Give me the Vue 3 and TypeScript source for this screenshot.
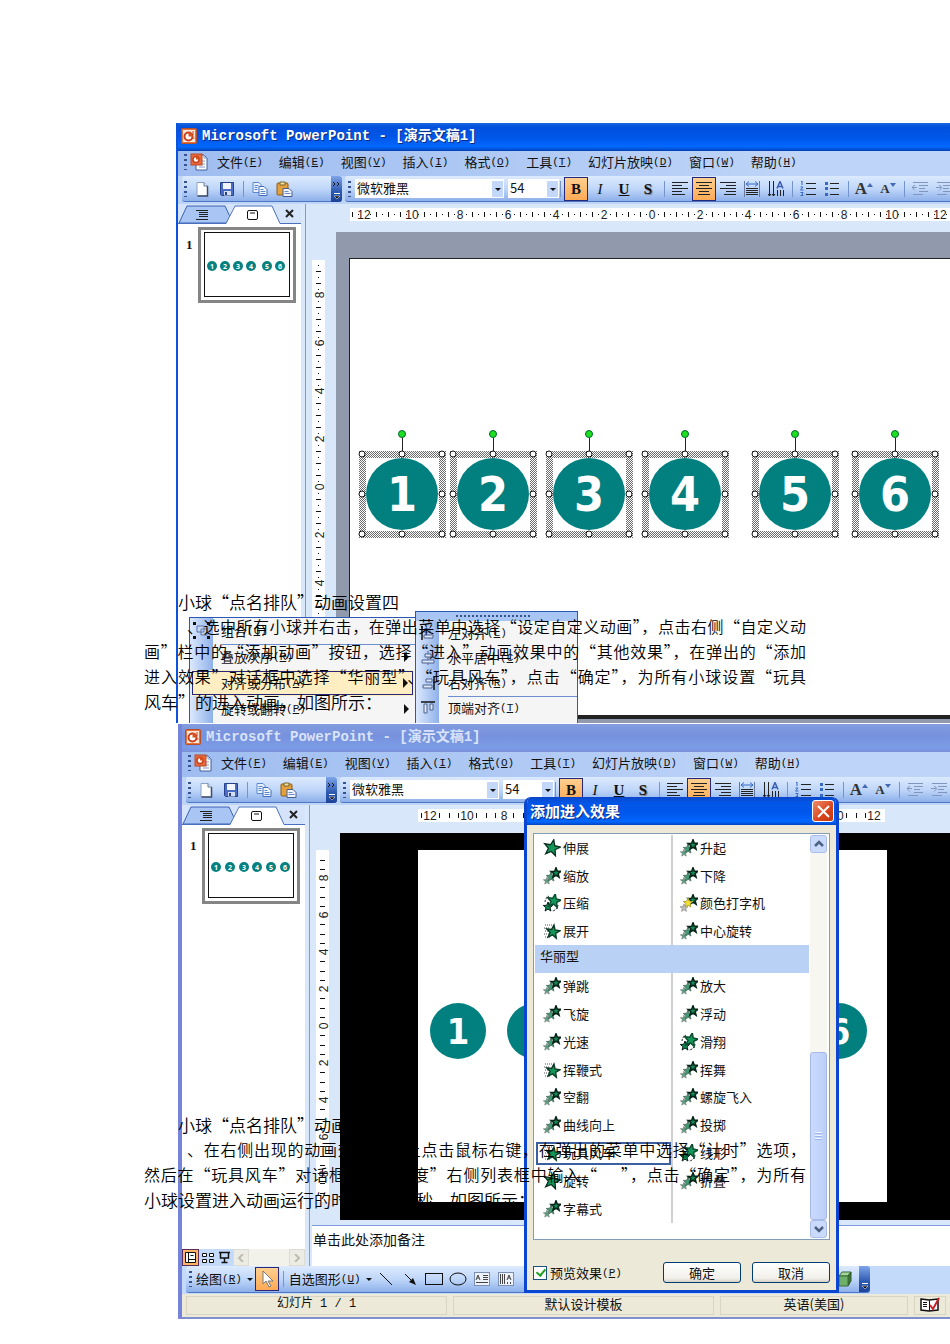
<script setup lang="ts">
import { ref } from 'vue'

interface MenuEntry { text: string; key: string }
interface Mark { pos: number; kind: 'label' | 'tick' | 'dot'; label: string }
interface Effect { name: string; icon: string }

const windows = [
  { id: 'first', active: true },
  { id: 'second', active: false },
]

const menus: MenuEntry[] = [
  { text: '文件', key: 'F' },
  { text: '编辑', key: 'E' },
  { text: '视图', key: 'V' },
  { text: '插入', key: 'I' },
  { text: '格式', key: 'O' },
  { text: '工具', key: 'T' },
  { text: '幻灯片放映', key: 'D' },
  { text: '窗口', key: 'W' },
  { text: '帮助', key: 'H' },
]

const formatTools = [
  'bold on', 'italic', 'underline', 'shadow', '|',
  'left', 'center on', 'right', 'spread', 'columns', '|',
  'numbers', 'bullets', '|', 'grow', 'shrink', '|', 'outdent', 'indent',
].map((t) => ({ name: t.split(' ')[0], on: t.endsWith(' on') }))

const letters: Record<string, string> = { bold: 'B', italic: 'I', underline: 'U', shadow: 'S' }

function marks(origin: number, step: number, perLabel: number, size: number, dotted: boolean): Mark[] {
  const out: Mark[] = []
  const first = Math.ceil((2 - origin) / step)
  const last = Math.floor((size - 2 - origin) / step)
  for (let n = first; n <= last; n++) {
    const pos = Math.round(origin + n * step)
    if (n % perLabel === 0) out.push({ pos, kind: 'label', label: String(Math.abs(n / perLabel) * 2) })
    else out.push({ pos, kind: dotted && n % 2 !== 0 ? 'dot' : 'tick', label: '' })
  }
  return out
}

const rulers: Record<string, { w: number; h: number; across: Mark[]; down: Mark[] }> = {
  first: { w: 604, h: 463, across: marks(302, 6, 8, 604, true), down: marks(227, 6, 8, 463, true) },
  second: { w: 467, h: 352, across: marks(234, 9.25, 4, 467, false), down: marks(176, 9.25, 4, 352, false) },
}

const thumbs: Record<string, number[]> = {
  first: [8, 21, 34, 47, 63, 76],
  second: [8, 22, 36, 49, 63, 77],
}

const balls = [402, 493, 589, 685, 795, 895].map((x, i) => ({ x: x - 336, n: i + 1 }))
const showBalls = [40, 117, 193, 269, 345, 421].map((x, i) => ({ x, n: i + 1 }))

const star = '0,-10 2.5,-3.4 9.5,-3.1 4,1.3 5.9,8.1 0,4.2 -5.9,8.1 -4,1.3 -9.5,-3.1 -2.5,-3.4'

const moderate: Effect[] = [
  { name: '伸展', icon: 'star' }, { name: '升起', icon: 'trail' },
  { name: '缩放', icon: 'trail' }, { name: '下降', icon: 'trail' },
  { name: '压缩', icon: 'spin' }, { name: '颜色打字机', icon: 'gold' },
  { name: '展开', icon: 'fade' }, { name: '中心旋转', icon: 'trail' },
]
const exciting: Effect[] = [
  { name: '弹跳', icon: 'trail' }, { name: '放大', icon: 'trail' },
  { name: '飞旋', icon: 'trail' }, { name: '浮动', icon: 'trail' },
  { name: '光速', icon: 'trail' }, { name: '滑翔', icon: 'spin' },
  { name: '挥鞭式', icon: 'fade' }, { name: '挥舞', icon: 'trail' },
  { name: '空翻', icon: 'trail' }, { name: '螺旋飞入', icon: 'trail' },
  { name: '曲线向上', icon: 'trail' }, { name: '投掷', icon: 'trail' },
  { name: '玩具风车', icon: 'fade' }, { name: '线形', icon: 'spin' },
  { name: '旋转', icon: 'star' }, { name: '折叠', icon: 'trail' },
  { name: '字幕式', icon: 'trail' },
]
const chosen = ref('玩具风车')
const preview = ref(true)
</script>

<template>
  <svg class="symbols" aria-hidden="true">
    <defs>
      <pattern id="hatch" width="4" height="4" patternUnits="userSpaceOnUse">
        <rect width="4" height="4" fill="#fff" />
        <path d="M0 0h1v1H0zM2 0h1v1H2zM1 1h1v1H1zM3 1h1v1H3zM0 2h1v1H0zM2 2h1v1H2zM1 3h1v1H1zM3 3h1v1H3z" fill="#6a6a6a" />
      </pattern>
    </defs>
    <symbol id="i-app" viewBox="0 0 16 16">
      <rect x="0.5" y="0.5" width="15" height="15" rx="1" fill="#e8703a" stroke="#b5502c" />
      <rect x="2" y="2" width="12" height="12" fill="#fbe9dc" />
      <circle cx="7.5" cy="8.5" r="4" fill="#fff" stroke="#c8401c" stroke-width="2" />
      <path d="M7.5 8.5V4.5a4 4 0 0 1 4 4z" fill="#d9541e" />
      <path d="M12 3v4M13.5 10h-2" stroke="#c8401c" />
    </symbol>
    <symbol id="i-doc" viewBox="0 0 18 18">
      <path d="M6 2h8l3 3v12H6z" fill="#fff" stroke="#3f5f9c" />
      <path d="M14 2v3h3M9 8h6M9 11h6M9 14h6" fill="none" stroke="#7b98cf" />
      <rect x="1" y="1" width="11" height="11" fill="#e66a3b" stroke="#b9482a" />
      <circle cx="6" cy="6.500" r="3" fill="#fff" stroke="#c8401c" stroke-width="1.500" />
      <path d="M6 6.500V3.500a3 3 0 0 1 3 3z" fill="#d9541e" />
    </symbol>
    <symbol id="i-new" viewBox="0 0 16 16">
      <path d="M3 1.500h7l3.500 3.500v10H3z" fill="#fff" stroke="#8ea2c4" />
      <path d="M13.500 5v10H3.500" fill="none" stroke="#3c4c6c" stroke-width="1.500" />
      <path d="M10 1.500V5h3.500" fill="#dce6f7" stroke="#66789c" />
    </symbol>
    <symbol id="i-save" viewBox="0 0 16 16">
      <path d="M1.500 1.500h13v13h-12l-1-1z" fill="#4a6cc4" stroke="#27408c" />
      <rect x="4" y="2" width="8" height="6" fill="#f2f5fc" />
      <rect x="5" y="10" width="7" height="4.500" fill="#d5ddf0" />
      <rect x="6" y="11" width="2" height="3" fill="#27408c" />
    </symbol>
    <symbol id="i-copy" viewBox="0 0 16 16">
      <path d="M1 1.500h6l2 2v8H1z" fill="#e9f1ff" stroke="#5b86cc" />
      <path d="M7 5.500h5l3 3v6H7z" fill="#f4f8ff" stroke="#3f6dbb" />
      <path d="M2.500 4.500h4M2.500 6.500h3M2.500 8.500h3M8.500 8.500h3M8.500 10.500h5M8.500 12.500h5" stroke="#5b86cc" />
    </symbol>
    <symbol id="i-paste" viewBox="0 0 17 16">
      <rect x="1" y="2" width="11" height="12" rx="1" fill="#e3a03c" stroke="#8c5d16" />
      <path d="M4 1h5v3H4z" fill="#f3dfa0" stroke="#7b6431" />
      <path d="M7 7.500h6l3 3v5H7z" fill="#eef3fc" stroke="#4a5f8c" />
      <path d="M8.500 10.500h4M8.500 12.500h6" stroke="#6f8cc5" />
    </symbol>
    <symbol id="i-left" viewBox="0 0 16 16"><path d="M0 1.500h16M0 4.500h10M0 7.500h16M0 10.500h10M0 13.500h13" stroke="#222" /></symbol>
    <symbol id="i-center" viewBox="0 0 16 16"><path d="M0 1.500h16M3 4.500h10M0 7.500h16M3 10.500h10M2 13.500h12" stroke="#222" /></symbol>
    <symbol id="i-right" viewBox="0 0 16 16"><path d="M0 1.500h16M6 4.500h10M0 7.500h16M6 10.500h10M4 13.500h12" stroke="#222" /></symbol>
    <symbol id="i-spread" viewBox="0 0 16 16">
      <path d="M0.500 0v16M15.500 0v16" stroke="#66799f" />
      <path d="M2 3h12M5 0.500L2 3l3 2.500M11 0.500L14 3l-3 2.500" fill="none" stroke="#3569c4" />
      <path d="M2 7.500h12M2 9.500h12M2 11.500h12M2 13.500h12" stroke="#222" />
    </symbol>
    <symbol id="i-columns" viewBox="0 0 16 16">
      <path d="M1.500 0v15M5.500 0v15M9.500 9v6M12.500 9v6M15.500 9v6M0 13l1.500 2L3 13M4 13l1.500 2L7 13" fill="none" stroke="#222" />
      <path d="M9 7.500L12 0.500l3 7M10 5.500h4" fill="none" stroke="#3a5faf" stroke-width="1.500" />
    </symbol>
    <symbol id="i-numbers" viewBox="0 0 16 16">
      <path d="M6 2.500h10M6 7.500h10M6 13.500h10" stroke="#222" />
      <path d="M1 1l1-1v4M0.500 6h2.500l-2.500 3h3M0.500 11.500h2.500l-1 1.500 1 1.500H0.500" fill="none" stroke="#3569c4" />
    </symbol>
    <symbol id="i-bullets" viewBox="0 0 16 16">
      <path d="M6 2.500h9M6 7.500h9M6 13.500h9" stroke="#222" />
      <path d="M1 1h3v3H1zM1 6h3v3H1zM1 12h3v3H1z" fill="#3569c4" />
    </symbol>
    <symbol id="i-outdent" viewBox="0 0 16 16"><path d="M1 1.500h15M7 4.500h9M7 7.500h6M7 10.500h9M1 13.500h10M0 6.500h5M3 4L0 6.500l3 3" fill="none" stroke="#8195bd" /></symbol>
    <symbol id="i-indent" viewBox="0 0 16 16"><path d="M1 1.500h15M7 4.500h9M7 7.500h6M7 10.500h9M1 13.500h10M0 6.500h5M3 4l3 2.500-3 3" fill="none" stroke="#8195bd" /></symbol>
    <symbol id="i-group" viewBox="0 0 17 17">
      <path d="M0 0h3v3H0zM14 0h3v3h-3zM0 14h3v3H0zM14 14h3v3h-3z" fill="#111" />
      <path d="M4 4h7v6H4zM8 7h6v6H8z" fill="#c4d6f5" stroke="#5d76a5" />
    </symbol>
    <symbol id="i-al" viewBox="0 0 14 14"><path d="M1 0v14" stroke="#111" stroke-width="1.500" /><path d="M3 3h6v3H3zM3 9h9v3H3z" fill="#dfe8f8" stroke="#4d618e" /></symbol>
    <symbol id="i-ac" viewBox="0 0 14 14"><path d="M7 0v14" stroke="#53699a" /><path d="M4 3h6v3H4zM1 9h12v3H1z" fill="#dfe8f8" stroke="#4d618e" /></symbol>
    <symbol id="i-ar" viewBox="0 0 14 14"><path d="M13 0v14" stroke="#111" stroke-width="1.500" /><path d="M5 3h6v3H5zM2 9h9v3H2z" fill="#dfe8f8" stroke="#4d618e" /></symbol>
    <symbol id="i-at" viewBox="0 0 14 14"><path d="M0 1h14" stroke="#111" stroke-width="1.500" /><path d="M3 3h3v9H3zM9 3h3v6H9z" fill="#dfe8f8" stroke="#4d618e" /></symbol>
    <symbol id="s-star" viewBox="0 0 18 18"><polygon :points="star" transform="translate(9 9) rotate(12) scale(.85)" fill="#13965a" stroke="#0a2e1e" stroke-width="1.500" /></symbol>
    <symbol id="s-trail" viewBox="0 0 18 18">
      <polygon :points="star" transform="translate(4 14) scale(.38)" fill="#5a9f83" stroke="#76877f" stroke-width="2" />
      <polygon :points="star" transform="translate(8 10) scale(.5)" fill="#3c9a74" stroke="#58786a" stroke-width="2" />
      <polygon :points="star" transform="translate(13 6) scale(.52)" fill="#128a55" stroke="#062417" stroke-width="3" />
    </symbol>
    <symbol id="s-gold" viewBox="0 0 18 18">
      <polygon :points="star" transform="translate(4 14) scale(.42)" fill="#bbb" stroke="#999" stroke-width="2" />
      <polygon :points="star" transform="translate(13 6) scale(.52)" fill="#128a55" stroke="#062417" stroke-width="3" />
      <polygon :points="star" transform="translate(8 9) scale(.5)" fill="#f5e334" stroke="#b5a92a" stroke-width="2" />
    </symbol>
    <symbol id="s-spin" viewBox="0 0 18 18">
      <path d="M2 8c0-3 2-5 4-6M15 11c0 3-3 6-6 6" fill="none" stroke="#333" stroke-dasharray="2 1" />
      <polygon :points="star" transform="translate(5 13) scale(.5)" fill="#128a55" stroke="#062417" stroke-width="2" />
      <polygon :points="star" transform="translate(11 7) rotate(10) scale(.72)" fill="#13965a" stroke="#0a4a2e" stroke-width="2" />
    </symbol>
    <symbol id="s-fade" viewBox="0 0 18 18">
      <path d="M2 3h7M1 6h5M2 9h6M1 12h5M2 15h6" stroke="#555" stroke-dasharray="1 1" />
      <polygon :points="star" transform="translate(10 10) rotate(8) scale(.7)" fill="#13965a" stroke="#0a3a24" stroke-width="2" />
    </symbol>
  </svg>

  <main class="page">
    <section v-for="win in windows" :key="win.id" class="window" :class="win.id">
      <header class="titlebar">
        <svg width="16" height="16"><use href="#i-app" /></svg>
        <h1>Microsoft PowerPoint - [演示文稿1]</h1>
      </header>

      <nav class="menubar">
        <i class="grip"></i>
        <svg class="docicon" width="18" height="18"><use href="#i-doc" /></svg>
        <button v-for="m in menus" :key="m.key" type="button" class="menu">{{ m.text }}<span class="key">(<u>{{ m.key }}</u>)</span></button>
      </nav>

      <div class="toolbars">
        <div class="bar standard">
          <i class="grip"></i>
          <button type="button" class="tool" aria-label="新建"><svg width="16" height="16"><use href="#i-new" /></svg></button>
          <button type="button" class="tool" aria-label="保存"><svg width="16" height="16"><use href="#i-save" /></svg></button>
          <i class="sep"></i>
          <button type="button" class="tool" aria-label="复制"><svg width="16" height="16"><use href="#i-copy" /></svg></button>
          <button type="button" class="tool" aria-label="粘贴"><svg width="17" height="16"><use href="#i-paste" /></svg></button>
          <button type="button" class="more" aria-label="工具栏选项">
            <svg width="11" height="26"><path d="M2 6l2 2-2 2M6 6l2 2-2 2" fill="none" stroke="#111" /><path d="M3 17.500h6" stroke="#fff" /><path d="M3 20h6l-3 3z" fill="#111" stroke="#fff" stroke-width=".5" /></svg>
          </button>
        </div>
        <div class="bar format">
          <i class="grip"></i>
          <span class="drop"><select class="font" aria-label="字体"><option>微软雅黑</option></select></span>
          <span class="drop"><select class="size" aria-label="字号"><option>54</option></select></span>
          <i class="sep narrow"></i>
          <template v-for="(t, i) in formatTools" :key="i">
            <i v-if="t.name === '|'" class="sep"></i>
            <button v-else type="button" class="tool" :class="[t.name, { on: t.on }]" :aria-label="t.name">
              <template v-if="letters[t.name]">{{ letters[t.name] }}</template>
              <template v-else-if="t.name === 'grow' || t.name === 'shrink'">A<svg width="6" height="4"><path :d="t.name === 'grow' ? 'M0 4h6L3 0z' : 'M0 0h6L3 4z'" fill="#4469b5" /></svg></template>
              <svg v-else width="16" height="16"><use :href="'#i-' + t.name" /></svg>
            </button>
          </template>
        </div>
      </div>

      <div class="body">
        <aside class="side">
          <div class="tabs">
            <svg class="tabshape" width="123" height="20">
              <path d="M1 19L9 2h38l8 17z" fill="#a9c5f3" stroke="#3b62b0" />
              <path d="M48 20L56 2h38l8 18z" fill="#fff" />
              <path d="M0 19.500h48L57 2h37l8 17.500h21" fill="none" stroke="#4a70bd" />
            </svg>
            <button type="button" class="tab" aria-label="大纲"><svg width="14" height="12"><path d="M0 1.500h12M3 3.500h9M3 5.500h9M3 7.500h9M0 10.500h12" stroke="#222" /></svg></button>
            <button type="button" class="tab" aria-label="幻灯片"><svg width="12" height="12"><rect x="0.500" y="1.500" width="10" height="9" rx="1.500" fill="#fff" stroke="#111" /><path d="M3 4h5" stroke="#111" /></svg></button>
            <button type="button" class="tab close" aria-label="关闭"><svg width="9" height="9"><path d="M1 1l7 7M8 1L1 8" stroke="#222" stroke-width="2" /></svg></button>
          </div>
          <div class="thumbs">
            <b class="num">1</b>
            <div class="thumb">
              <svg width="86" height="65">
                <rect x="0.500" y="0.500" width="85" height="64" fill="#fff" stroke="#111" />
                <g v-for="(x, i) in thumbs[win.id]" :key="i">
                  <circle :cx="x" cy="34" r="5" fill="#078080" />
                  <text :x="x" y="37" class="tiny">{{ i + 1 }}</text>
                </g>
              </svg>
            </div>
          </div>
          <div v-if="!win.active" class="views">
            <button type="button" class="view on" aria-label="普通视图"><svg width="13" height="13"><path d="M1.500 1.500h10v10h-10zM4.500 1v10M4.500 8.500h7M6.500 4.500h3" fill="#fff" stroke="#111" /></svg></button>
            <button type="button" class="view" aria-label="浏览视图"><svg width="13" height="13"><path d="M1.500 2.500h4v3h-4zM8.500 2.500h4v3h-4zM1.500 8.500h4v3h-4zM8.500 8.500h4v3h-4z" fill="#fff" stroke="#111" /></svg></button>
            <button type="button" class="view" aria-label="放映"><svg width="13" height="13"><path d="M1 1.500h11M2.500 2v5h8V2M6.500 7v4M3.500 11.500h6" fill="none" stroke="#111" stroke-width="1.500" /></svg></button>
            <span class="hscroll"><i><svg width="8" height="8"><path d="M6 0L2 4l4 4" fill="none" stroke="#bdbcb0" stroke-width="2" /></svg></i><i><svg width="8" height="8"><path d="M2 0l4 4-4 4" fill="none" stroke="#bdbcb0" stroke-width="2" /></svg></i></span>
          </div>
        </aside>

        <div class="splitter"></div>

        <div class="work">
          <svg class="ruler across" :width="rulers[win.id].w" height="13">
            <rect width="100%" height="13" fill="#fff" />
            <template v-for="m in rulers[win.id].across" :key="m.pos">
              <text v-if="m.kind === 'label'" :x="m.pos" y="11" class="mark">{{ m.label }}</text>
              <path v-else-if="m.kind === 'tick'" :d="`M${m.pos + 0.5} 4v5`" stroke="#111" />
              <path v-else :d="`M${m.pos} 6.500h1`" stroke="#111" />
            </template>
          </svg>
          <div class="stage">
            <svg class="ruler down" width="13" :height="rulers[win.id].h">
              <rect width="13" height="100%" fill="#fff" />
              <template v-for="m in rulers[win.id].down" :key="m.pos">
                <text v-if="m.kind === 'label'" :transform="`translate(12 ${m.pos}) rotate(-90)`" class="mark">{{ m.label }}</text>
                <path v-else-if="m.kind === 'tick'" :d="`M4 ${m.pos + 0.5}h5`" stroke="#111" />
                <path v-else :d="`M6 ${m.pos + 0.5}h1`" stroke="#111" />
              </template>
            </svg>

            <div v-if="win.active" class="canvas">
              <div class="slide"></div>
              <svg class="shapes" width="700" height="120" viewBox="0 192 700 120">
                <g v-for="b in balls" :key="b.n" :transform="`translate(${b.x} 262)`">
                  <path d="M-43-43H44V44H-43zM-36-36V37H37V-36z" fill="url(#hatch)" fill-rule="evenodd" />
                  <path d="M.5-56V-40" stroke="#222" />
                  <circle cx="0" cy="0" r="36" fill="#028080" />
                  <text x="0" y="17" class="digit">{{ b.n }}</text>
                  <g fill="#fff" stroke="#111">
                    <circle v-for="p in [[-40,-40],[0,-40],[40,-40],[-40,0],[40,0],[-40,40],[0,40],[40,40]]" :key="p.join()" :cx="p[0]" :cy="p[1]" r="3" />
                  </g>
                  <circle cx="0" cy="-60" r="3.500" fill="#1fe01f" stroke="#063" />
                </g>
              </svg>
            </div>

            <div v-else class="canvas show">
              <svg class="showslide" width="469" height="352">
                <rect width="469" height="352" fill="#fff" />
                <g v-for="b in showBalls" :key="b.n">
                  <circle :cx="b.x" cy="181" r="28" fill="#028080" />
                  <text :x="b.x" y="194" class="digit small">{{ b.n }}</text>
                </g>
              </svg>
            </div>
          </div>
          <div v-if="!win.active" class="notes">单击此处添加备注</div>
        </div>
      </div>

      <template v-if="win.active">
        <div class="popup context">
          <button type="button" class="item"><svg width="17" height="17"><use href="#i-group" /></svg>组合<span class="key">(<u>G</u>)</span></button>
          <button type="button" class="item line arrow"><svg width="17" height="17"></svg>叠放次序<span class="key">(<u>R</u>)</span></button>
          <button type="button" class="item hot arrow"><svg width="17" height="17"></svg>对齐或分布<span class="key">(<u>A</u>)</span></button>
          <button type="button" class="item arrow"><svg width="17" height="17"></svg>旋转或翻转<span class="key">(<u>P</u>)</span></button>
        </div>
        <div class="popup submenu">
          <div class="tear"></div>
          <button type="button" class="item"><svg width="14" height="14"><use href="#i-al" /></svg>左对齐<span class="key">(<u>L</u>)</span></button>
          <button type="button" class="item"><svg width="14" height="14"><use href="#i-ac" /></svg>水平居中<span class="key">(<u>C</u>)</span></button>
          <button type="button" class="item"><svg width="14" height="14"><use href="#i-ar" /></svg>右对齐<span class="key">(<u>R</u>)</span></button>
          <button type="button" class="item line"><svg width="14" height="14"><use href="#i-at" /></svg>顶端对齐<span class="key">(<u>T</u>)</span></button>
        </div>
      </template>

      <template v-else>
        <div class="drawrow">
          <div class="bar draw">
            <i class="grip"></i>
            <button type="button" class="menu">绘图<span class="key">(<u>R</u>)</span><i class="tri"></i></button>
            <button type="button" class="tool on" aria-label="选择"><svg width="14" height="18"><path d="M3 1v13l3-3 3 6 2-1-3-5h5z" fill="#fff" stroke="#777" /></svg></button>
            <i class="sep"></i>
            <button type="button" class="menu">自选图形<span class="key">(<u>U</u>)</span><i class="tri"></i></button>
            <button type="button" class="tool" aria-label="直线"><svg width="18" height="14"><path d="M3 1l12 12" stroke="#111" /></svg></button>
            <button type="button" class="tool" aria-label="箭头"><svg width="18" height="14"><path d="M4 2l8 8" stroke="#111" /><path d="M15 13l-7-3 4-4z" fill="#111" /></svg></button>
            <button type="button" class="tool" aria-label="矩形"><svg width="18" height="14"><rect x="0.500" y="1.500" width="17" height="11" fill="none" stroke="#111" /></svg></button>
            <button type="button" class="tool" aria-label="椭圆"><svg width="18" height="14"><ellipse cx="9" cy="7" rx="8" ry="6" fill="none" stroke="#111" /></svg></button>
            <button type="button" class="tool" aria-label="文本框"><svg width="16" height="14"><rect x="0.500" y="0.500" width="15" height="13" fill="#eef3fb" stroke="#7b8fb5" /><path d="M2 8l2-5 2 5M3 6h2M9 3.500h5M9 5.500h5M9 7.500h5M2 10.500h12" fill="none" stroke="#444" /></svg></button>
            <button type="button" class="tool" aria-label="竖排文本框"><svg width="16" height="14"><rect x="0.500" y="0.500" width="15" height="13" fill="#eef3fb" stroke="#7b8fb5" /><path d="M9 8l2-5 2 5M10 6h2M2.500 2v10M4.500 2v10M6.500 2v10M9.500 10v2M12.500 10v2" fill="none" stroke="#444" /></svg></button>
            <svg class="cube" width="14" height="16"><path d="M1 5l3-4h9l-3 4z" fill="#a5d79b" stroke="#3d6b38" /><path d="M10 5l3-4v9l-3 5z" fill="#3c7d38" stroke="#2c5929" /><path d="M1 5h9v10H1z" fill="#6fb068" stroke="#3d6b38" /></svg>
            <button type="button" class="more" aria-label="工具栏选项"><svg width="11" height="26"><path d="M3 17.500h6" stroke="#fff" /><path d="M3 20h6l-3 3z" fill="#111" stroke="#fff" stroke-width=".5" /></svg></button>
          </div>
        </div>
        <footer class="status">
          <span class="cell mono">幻灯片 1 / 1</span>
          <span class="cell">默认设计模板</span>
          <span class="cell lang">英语(美国)</span>
          <span class="cell book"><svg width="20" height="16"><path d="M1 3l8 1 9-1v11l-9 1-8-1z" fill="#fff" stroke="#111" stroke-width="1.500" /><path d="M9.500 4v11M3 6.500h4M3 8.500h4M3 10.500h4" stroke="#111" /><path d="M10 9l3 4 6-11" fill="none" stroke="#c3202a" stroke-width="2" /></svg></span>
        </footer>

        <section class="dialog" role="dialog" aria-label="添加进入效果">
          <header class="dtitle">
            <h2>添加进入效果</h2>
            <button type="button" class="x" aria-label="关闭"><svg width="13" height="13"><path d="M1 1l11 11M12 1L1 12" stroke="#fff" stroke-width="2" /></svg></button>
          </header>
          <div class="dbody">
            <div class="listbox">
              <div class="list">
                <div class="grid">
                  <button v-for="e in moderate" :key="e.name" type="button" class="effect" :class="{ picked: chosen === e.name }" @click="chosen = e.name"><svg width="18" height="18"><use :href="'#s-' + e.icon" /></svg>{{ e.name }}</button>
                </div>
                <h3>华丽型</h3>
                <div class="grid">
                  <button v-for="e in exciting" :key="e.name" type="button" class="effect" :class="{ picked: chosen === e.name }" @click="chosen = e.name"><svg width="18" height="18"><use :href="'#s-' + e.icon" /></svg>{{ e.name }}</button>
                </div>
              </div>
              <div class="vscroll">
                <i class="sb"><svg width="10" height="8"><path d="M1 6l4-4 4 4" fill="none" stroke="#4d6185" stroke-width="2.500" /></svg></i>
                <i class="knob"></i>
                <i class="sb"><svg width="10" height="8"><path d="M1 2l4 4 4-4" fill="none" stroke="#4d6185" stroke-width="2.500" /></svg></i>
              </div>
            </div>
            <div class="actions">
              <label class="check"><input v-model="preview" type="checkbox" />预览效果<span class="key">(<u>P</u>)</span></label>
              <button type="button" class="push">确定</button>
              <button type="button" class="push">取消</button>
            </div>
          </div>
        </section>
      </template>
    </section>

    <article class="prose one">
      <h4>小球“点名排队”动画设置四</h4>
      <p class="full start">、选中所有小球并右击，在弹出菜单中选择“设定自定义动画”，点击右侧“自定义动</p>
      <p class="full">画”栏中的“添加动画”按钮，选择“进入”动画效果中的“其他效果”，在弹出的“添加</p>
      <p class="full">进入效果”对话框中选择“华丽型”、“玩具风车”，点击“确定”，为所有小球设置“玩具</p>
      <p>风车”的进入动画，如图所示：</p>
    </article>
    <article class="prose two">
      <h4>小球“点名排队”动画设置五</h4>
      <p class="full start">、在右侧出现的动画效果列表上点击鼠标右键，在弹出的菜单中选择“计时”选项，</p>
      <p class="full">然后在“玩具风车”对话框中将“速度”右侧列表框中输入“&emsp;&ensp;”，点击“确定”，为所有</p>
      <p>小球设置进入动画运行的时间为五点秒，如图所示：</p>
    </article>
  </main>
</template>

<style>
html, body { background: #fff; }
body { margin: 0; overflow-x: hidden; }
</style>

<style scoped>
* { box-sizing: border-box; }
.symbols { position: absolute; width: 0; height: 0; }
svg { display: block; flex: none; }
h1, h2, h3, h4, p { margin: 0; font-weight: inherit; }
button { font: inherit; color: inherit; border: 0; background: none; padding: 0; white-space: nowrap; }
.page {
  position: relative;
  padding: 123px 0 25px 176px;
  overflow: hidden;
  font: 13px/16px "Noto Sans CJK SC", sans-serif;
  color: #111;
}
.key { font: 11px/16px "Liberation Mono", monospace; }
.window { position: relative; display: flex; flex-direction: column; overflow: hidden; background: #d9e7fb; }
.first { height: 600px; border-left: 2px solid #0b53dd; }
.second { margin: 1px 0 0 2px; border-left: 4px solid #7584d9; border-bottom: 2px solid #7f8fd0; }

.titlebar {
  display: flex; align-items: center; gap: 5px; height: 28px; padding: 0 0 2px 3px; flex: none;
  background: linear-gradient(#1767e0, #0250dc 15%, #0156e8 50%, #0068ff 85%, #0241b5);
}
.titlebar h1 { font: bold 14px/18px "Liberation Mono", "Noto Sans CJK SC", monospace; color: #fff; text-shadow: 1px 1px #0a2c80; white-space: nowrap; }
.second .titlebar { background: linear-gradient(#839de0, #7791dd 40%, #7b9ce6 85%, #7b90da); }
.second .titlebar h1 { color: #d9e4fa; text-shadow: none; }

.menubar { display: flex; align-items: center; gap: 16px; height: 25px; padding: 0 0 3px 6px; flex: none; background: linear-gradient(90deg, #9fbdf0, #bed4f8 80%); }
.menubar .grip { margin-right: -13px; }
.docicon { margin-right: -7px; }
.menu { display: flex; align-items: center; }
.grip { width: 3px; height: 16px; flex: none; background: repeating-linear-gradient(#35548f 0 2px, transparent 2px 5px); }

.toolbars { display: flex; gap: 3px; height: 28px; padding: 0 0 2px 4px; flex: none; background: #bfd5f8; }
.bar { display: flex; align-items: center; height: 26px; background: linear-gradient(#dceafe, #c0d7f9 50%, #8db0ea); border-bottom: 1px solid #4d76c5; border-radius: 3px; }
.bar .grip { margin: 0 4px 0 3px; }
.standard { width: 160px; flex: none; }
.second .standard { width: 151px; }
.standard .grip { margin: 0 2px 0 2px; }
.standard .tool { width: 25px; }
.format { flex: 1; min-width: 0; border-radius: 3px 0 0 3px; }
.more { margin-left: auto; width: 11px; height: 26px; background: linear-gradient(#7ea5ea, #2d59b0 60%, #1d4398); border-radius: 0 3px 3px 0; }
.tool { display: flex; align-items: center; justify-content: center; width: 24px; height: 24px; flex: none; }
.tool.on { border: 1px solid #26267a; background: linear-gradient(#ffcf8e, #ffaa55); }
.bold, .italic, .underline, .shadow { font: bold 15px/18px "Liberation Serif", serif; }
.italic { font-style: italic; font-weight: 400; }
.underline { text-decoration: underline; }
.shadow { text-shadow: 1px 1px 1px #777; }
.grow, .shrink { font: bold 17px/18px "Liberation Serif", serif; color: #333; }
.shrink { font-size: 13px; }
.grow svg, .shrink svg { align-self: flex-start; margin-top: 6px; }
.sep { width: 8px; height: 16px; flex: none; background: linear-gradient(#7593cd, #7593cd) 4px 0 / 1px 100% no-repeat; }
.sep.narrow { width: 5px; background-position: 1px 0; }
.drop { position: relative; flex: none; margin-right: 4px; }
.drop:nth-of-type(2) { margin-right: 0; }
.drop::before { content: ""; position: absolute; right: 1px; top: 2px; width: 11px; height: 16px; background: #c3d8f8; pointer-events: none; }
.drop::after { content: ""; position: absolute; right: 3px; top: 9px; border: 3px solid transparent; border-top-color: #111; pointer-events: none; }
select { display: block; appearance: none; height: 19px; border: 0; border-radius: 0; padding: 0 2px 2px; background: #fff; color: #111; font: 13px/17px "Noto Sans CJK SC", sans-serif; }
.font { width: 149px; }
.size { width: 51px; }

.body { display: flex; flex: 1; min-height: 0; }
.first .body { overflow: hidden; }
.second .body { flex: none; height: 461px; }
.side { display: flex; flex-direction: column; width: 123px; flex: none; background: #fff; }
.tabs { position: relative; display: flex; height: 20px; background: #d5e4fb; }
.tabshape { position: absolute; inset: 0; }
.tab { position: relative; display: flex; align-items: center; justify-content: center; width: 50px; height: 21px; }
.tab.close { width: 23px; height: 18px; }
.thumbs { display: flex; flex: 1; padding: 3px 0 0 8px; }
.num { width: 12px; padding-top: 10px; font: bold 13px/16px "Liberation Serif", serif; }
.thumb { width: 98px; height: 76px; border: 3px solid #858585; padding: 2px 3px; }
.tiny { font: bold 7px "Noto Sans", sans-serif; fill: #fff; text-anchor: middle; }
.splitter { width: 7px; flex: none; border-right: 2px solid #d9e7fb; background: linear-gradient(90deg, #d9e7fb 4px, #7d9bd9 4px); }
.work { flex: 1; min-width: 0; overflow: hidden; display: flex; flex-direction: column; }
.ruler.across { margin: 4px 0 11px 42px; }
.second .ruler.across { margin-left: 106px; }
.mark { font: 12px "Liberation Sans", sans-serif; text-anchor: middle; fill: #222; }
.stage { display: flex; flex: 1; min-height: 0; }
.ruler.down { margin: 28px 11px 0 4px; }
.second .ruler.down { margin-top: 17px; }
.canvas { position: relative; flex: 1; min-width: 0; overflow: hidden; background: #9199ad; }
.first .canvas { padding: 26px 0 4px 13px; }
.slide { height: 461px; background: #fff; border: 1px solid #222; border-width: 1px 0 4px 1px; }
.shapes { position: absolute; left: 0; top: 192px; }
.digit { font: bold 48px "DejaVu Sans Condensed", "DejaVu Sans", sans-serif; fill: #fff; text-anchor: middle; }
.digit.small { font-size: 36px; }
.show { background: #000; padding: 17px 0 18px 78px; }
.notes { height: 41px; margin: 5px 0 0 -2px; padding: 4px 2px; border-top: 1px solid #7d9bd9; border-left: 1px solid #7d9bd9; background: #fff; font-size: 14px; line-height: 18px; }
.views { display: flex; height: 17px; background: #c4dafa; }
.view { display: flex; align-items: center; justify-content: center; width: 17px; }
.view.on { border: 1px solid #5a2d5a; background: #ffb565; }
.hscroll { display: flex; flex: 1; justify-content: space-between; background: #f2f1ea; }
.hscroll i { display: flex; align-items: center; justify-content: center; width: 16px; background: #ecebe4; border: 1px solid #dddcd3; }

.popup { position: absolute; display: flex; flex-direction: column; border: 1px solid #2c58b5; background: linear-gradient(90deg, #dce9fd, #8fb1ea 23px, #f5f5f5 23px); }
.context { left: 11px; top: 494px; width: 227px; height: 140px; }
.submenu { left: 237px; top: 488px; width: 163px; height: 140px; }
.item { position: relative; display: flex; align-items: center; height: 25px; flex: none; padding: 0 0 1px 3px; }
.context .item { height: 26px; }
.item svg { margin-right: 11px; }
.submenu .item svg { margin: 0 13px 0 2px; }
.line::before { content: ""; position: absolute; left: 32px; right: 0; top: 0; border-top: 1px solid #6d8fd0; }
.hot { margin: 0 1px; padding-left: 2px; outline: 1px solid #26267a; outline-offset: -2px; background: #ffeec2; }
.arrow::after { content: ""; position: absolute; right: 1px; top: 8px; border: 5px solid transparent; border-left-color: #111; }
.tear { height: 9px; flex: none; background: radial-gradient(circle, #35548f 1px, transparent 1px) 0 0 / 4px 6px repeat-x content-box, #a9c5f3; padding: 1px 46px 0 39px; }

.drawrow { background: #c4dafa; height: 28px; padding-left: 4px; flex: none; }
.draw { width: 684px; height: 27px; }
.draw .menu { margin: 0 2px 0 0; }
.draw .sep { margin-right: 2px; }
.tri { border: 3px solid transparent; border-top-color: #111; margin: 3px 0 0 5px; }
.cube { margin-left: auto; margin-right: 7px; }
.draw .more { margin-left: 0; }
.status { display: flex; gap: 6px; height: 23px; padding: 2px 4px; background: #ece9d8; flex: none; }
.cell { display: flex; align-items: center; justify-content: center; width: 261px; flex: none; padding-bottom: 3px; border: 1px solid #d8d5c4; white-space: nowrap; }
.cell.mono { font-family: "Liberation Mono", "Noto Sans CJK SC", monospace; font-size: 12px; }
.cell.lang { width: 188px; }
.cell.book { width: 32px; }

.dialog { position: absolute; left: 342px; top: 73px; width: 315px; border: solid #0a46d0; border-width: 0 3px 3px; border-radius: 7px 7px 0 0; background: #ece9d8; overflow: hidden; }
.dtitle { display: flex; align-items: center; justify-content: space-between; height: 28px; padding: 0 2px 0 3px; background: linear-gradient(#0a45c8, #0255e6 20%, #0158ee 60%, #0067ff 88%, #0344c0); }
.dtitle h2 { font-size: 15px; font-weight: 700; line-height: 20px; color: #fff; text-shadow: 1px 1px #0a2c80; }
.x { display: flex; align-items: center; justify-content: center; width: 22px; height: 22px; border: 1px solid #fff; border-radius: 3px; background: linear-gradient(135deg, #ee8b6c, #d9441c 60%, #c33a14); }
.dbody { padding: 8px 6px 7px; }
.listbox { display: flex; height: 407px; border: 1px solid #7f9db9; background: #fff; padding: 1px; }
.list { flex: 1; padding-right: 1px; }
.grid { display: grid; grid-template-columns: 1fr 1fr; height: 110px; grid-auto-rows: 1fr; background: linear-gradient(#d0d0d0, #d0d0d0) 50% 0 / 2px 100% no-repeat; }
h3 + .grid { height: 250px; }
.effect { display: flex; align-items: center; gap: 2px; margin: 2px 1px; padding: 0 0 1px 6px; border: 1px solid transparent; }
.picked { border: 2px solid #3b5f9f; padding-left: 5px; }
.list h3 { height: 28px; padding: 3px 5px; font-size: 13px; line-height: 16px; background: #b9d1f5; }
.vscroll { display: flex; flex-direction: column; width: 17px; margin-right: 1px; background: #f7f6f0; }
.sb { display: flex; align-items: center; justify-content: center; height: 18px; border: 1px solid #a9bfe9; border-radius: 3px; background: #c9dafc; }
.knob { height: 168px; margin-top: auto; border: 1px solid #a4b9e8; border-radius: 3px; background: repeating-linear-gradient(#eef4fe 0 1px, #9db6ea 1px 2px, transparent 2px 3px) center / 7px 9px no-repeat, linear-gradient(90deg, #cbdafd, #bccffa); }
.actions { display: flex; align-items: center; gap: 11px; padding-top: 22px; }
.check { display: flex; align-items: center; flex: 1; white-space: nowrap; }
.check input { appearance: none; width: 14px; height: 14px; margin: 0 3px 0 0; border: 1px solid #1c5180; background: #fff; }
.check input:checked::before { content: ""; display: block; width: 4px; height: 7px; margin: 0 0 0 4px; border: solid #21a121; border-width: 0 2px 2px 0; transform: rotate(40deg); }
.push { width: 78px; height: 21px; border: 1px solid #003c74; border-radius: 3px; background: linear-gradient(#fff, #f1f0ea 80%, #d8d0c4); line-height: 18px; }

/* Running text laid over both windows */
.prose { position: absolute; left: 144px; width: 662px; color: #000; font-weight: 350; font-size: 17px; line-height: 25px; pointer-events: none; }
.one { top: 589px; }
.two { top: 1112px; }
.prose h4 { padding-left: 34px; font-size: 17px; }
.prose p { white-space: nowrap; }
.prose .full { font-size: 16px; text-align: justify; text-align-last: justify; white-space: normal; }
.prose .start { padding-left: 43px; }
</style>
